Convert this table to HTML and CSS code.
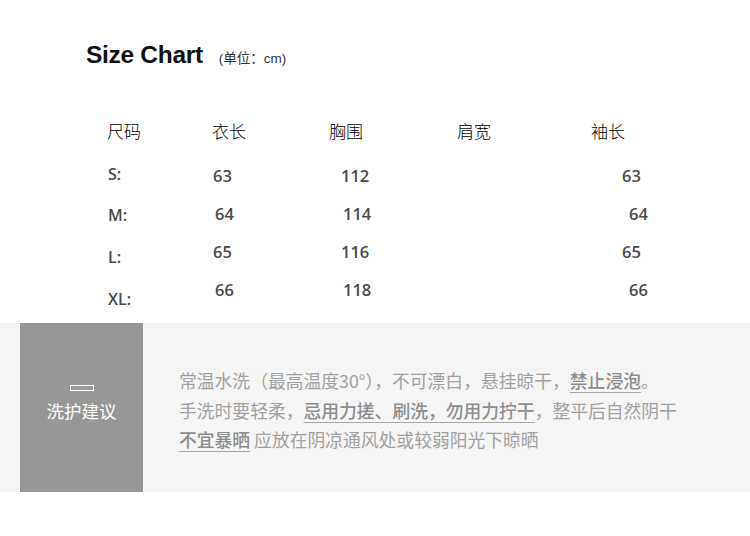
FILE: index.html
```html
<!DOCTYPE html>
<html lang="zh">
<head>
<meta charset="utf-8">
<title>Size Chart</title>
<link rel="stylesheet" href="styles.css">
</head>
<body>
<div class="page">
  <div class="title-row">
    <h1 class="title">Size Chart</h1>
    <span class="unit">(单位：cm)</span>
  </div>

  <div class="table-head">
    <span>尺码</span>
    <span>衣长</span>
    <span>胸围</span>
    <span>肩宽</span>
    <span>袖长</span>
  </div>

  <div class="table-body">
    <div class="labels">
      <div class="label">S:</div>
      <div class="label">M:</div>
      <div class="label">L:</div>
      <div class="label">XL:</div>
    </div>
    <div class="values">
      <div class="vrow"><span>63</span><span>112</span><span>63</span></div>
      <div class="vrow"><span class="nudge">64</span><span class="nudge">114</span><span class="nudge2">64</span></div>
      <div class="vrow"><span>65</span><span>116</span><span>65</span></div>
      <div class="vrow"><span class="nudge">66</span><span class="nudge">118</span><span class="nudge2">66</span></div>
    </div>
  </div>

  <div class="care">
    <div class="care-label">
      <div class="care-icon"></div>
      <div class="care-title">洗护建议</div>
    </div>
    <div class="care-text">
      <p>常温水洗（最高温度30°），不可漂白，悬挂晾干，<b>禁止浸泡</b>。</p>
      <p>手洗时要轻柔，<b>忌用力搓、刷洗，勿用力拧干</b>，整平后自然阴干</p>
      <p><b>不宜暴晒</b> 应放在阴凉通风处或较弱阳光下晾晒</p>
    </div>
  </div>
</div>
</body>
</html>
```

FILE: styles.css
```css
html, body {
  margin: 0;
  padding: 0;
  background: #ffffff;
}

.page {
  width: 750px;
  height: 536px;
  overflow: hidden;
  font-family: "Noto Sans CJK SC", "Noto Sans", sans-serif;
}

.title-row {
  display: flex;
  align-items: baseline;
  padding: 40px 0 0 86px;
  height: 30px;
}

.title {
  margin: 0;
  font-family: "Liberation Sans", Arial, sans-serif;
  font-weight: 700;
  font-size: 24.5px;
  line-height: 30px;
  color: #111111;
  letter-spacing: -0.3px;
}

.unit {
  margin-left: 16px;
  font-family: "Liberation Sans", "Noto Sans CJK SC", sans-serif;
  font-size: 13.5px;
  color: #333333;
}

.table-head {
  display: grid;
  grid-template-columns: 105px 117px 128px 134px auto;
  padding-left: 107px;
  margin-top: 49px;
  height: 24px;
  font-size: 17px;
  font-weight: 300;
  line-height: 24px;
  color: #000000;
}

.table-body {
  display: flex;
  align-items: flex-start;
  margin-top: 10px;
  padding-left: 108px;
  height: 167px;
}

.labels {
  width: 105px;
  display: flex;
  flex-direction: column;
}

.label {
  height: 41.67px;
  display: flex;
  align-items: center;
  font-family: "Open Sans", sans-serif;
  font-weight: 600;
  font-size: 16px;
  color: #4a4a4a;
}

.values {
  margin-top: 3px;
  display: flex;
  flex-direction: column;
}

.vrow {
  display: grid;
  grid-template-columns: 128px 281px auto;
  height: 38px;
  align-items: center;
  font-family: "Open Sans", sans-serif;
  font-weight: 600;
  font-size: 16.5px;
  color: #4a4a4a;
}

.nudge {
  padding-left: 2px;
}

.nudge2 {
  padding-left: 7px;
}

.care {
  display: flex;
  height: 169px;
  margin-top: 3px;
  background: #f5f5f5;
}

.care-label {
  width: 123px;
  margin-left: 20px;
  background: #979797;
  display: flex;
  flex-direction: column;
  align-items: center;
  padding-top: 62px;
  box-sizing: border-box;
}

.care-icon {
  width: 24px;
  height: 6px;
  border: 1px solid #ffffff;
  box-sizing: border-box;
}

.care-title {
  margin-top: 9px;
  font-size: 17.5px;
  line-height: 22px;
  color: #ffffff;
}

.care-text {
  padding: 43px 0 0 36px;
  font-size: 17.8px;
  line-height: 29.5px;
  color: #a2a2a2;
}

.care-text p {
  margin: 0;
  white-space: nowrap;
}

.care-text b {
  font-weight: 500;
  color: #8e8e8e;
  text-decoration: underline;
  text-decoration-color: #aaaaaa;
  text-underline-offset: 4px;
}
```
